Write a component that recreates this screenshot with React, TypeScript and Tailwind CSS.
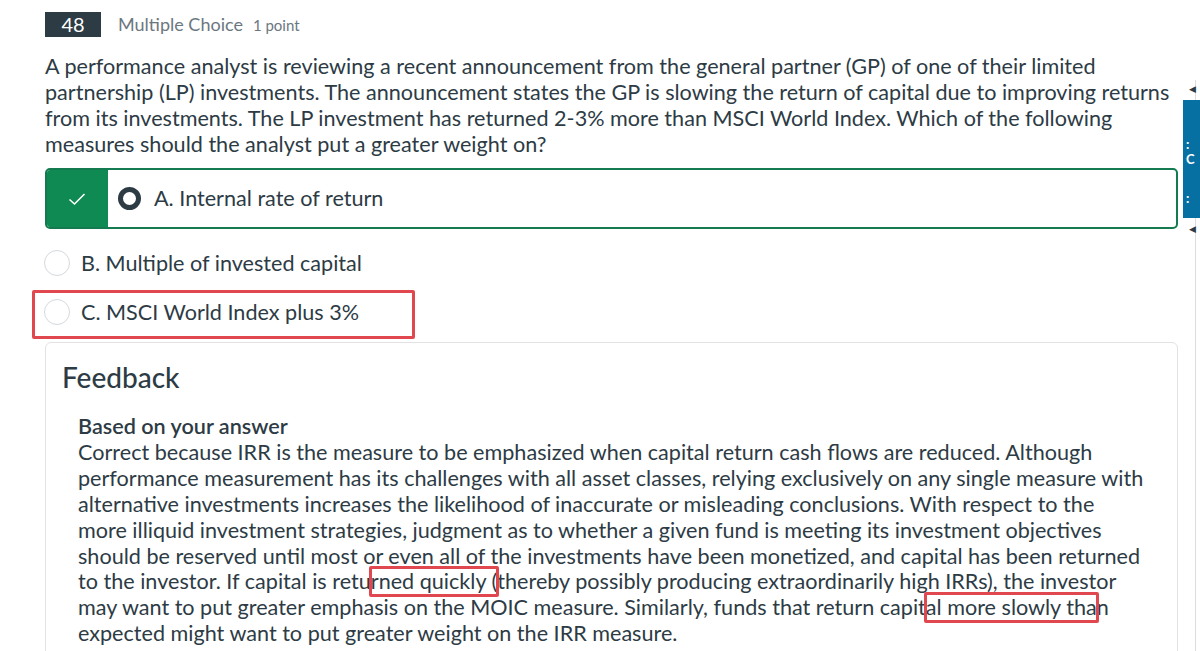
import React from 'react'

const question = [
  'A performance analyst is reviewing a recent announcement from the general partner (GP) of one of their limited',
  'partnership (LP) investments. The announcement states the GP is slowing the return of capital due to improving returns',
  'from its investments. The LP investment has returned 2-3% more than MSCI World Index. Which of the following',
  'measures should the analyst put a greater weight on?',
]

function Mark({ children }: { children: React.ReactNode }) {
  return (
    <span className="relative">
      {children}
      <span className="absolute -left-[2px] -right-[2px] -top-[2px] -bottom-[3px] border-[3px] border-[#e0474f] rounded-[2px]" />
    </span>
  )
}

export default function App() {
  return (
    <div className="relative w-[1200px] h-[651px] overflow-hidden bg-white text-[#2d3b45]" style={{ fontFamily: 'Lato, "Open Sans", sans-serif' }}>
      {/* right rail */}
      <div className="absolute left-[1195px] top-[80px] bottom-0 w-px bg-[#dcdcdc]" />
      <div className="absolute left-[1189px] top-[82px] text-[9px] text-[#2d3b45]">◀</div>
      <div className="absolute left-[1183px] top-[100px] w-[17px] h-[118px] bg-[#0770a3] text-white text-[13px] font-bold leading-none pl-[3px] pt-[38px]">
        <div>:</div>
        <div className="mt-[2px]">C</div>
        <div className="mt-[26px]">:</div>
      </div>
      <div className="absolute left-[1189px] top-[222px] text-[9px] text-[#2d3b45]">◀</div>

      <div className="pl-[45px] pr-[22px] pt-[11px]">
        {/* header */}
        <div className="flex items-center gap-[17px]">
          <div className="w-[56px] h-[25px] bg-[#2d3b45] text-white text-[20px] leading-[25px] text-center">48</div>
          <div className="flex items-baseline gap-[10px] text-[#6b7780]">
            <span className="text-[18px]">Multiple Choice</span>
            <span className="text-[15px]">1 point</span>
          </div>
        </div>

        {/* question */}
        <div className="mt-[15px] text-[21.6px] leading-[26px]">
          {question.map(l => (
            <div key={l} className="whitespace-nowrap">{l}</div>
          ))}
        </div>

        {/* answer A */}
        <div className="mt-[11px] flex h-[61px] w-[1133px] rounded-[5px] border-2 border-[#147a4f] overflow-hidden">
          <div className="w-[62px] bg-[#0f8a52] flex items-center justify-center -ml-[1px]">
            <svg width="18" height="14" viewBox="0 0 18 14" fill="none">
              <path d="M1.5 7.5 L6.5 12 L16.5 2" stroke="white" strokeWidth="1.6" />
            </svg>
          </div>
          <div className="flex items-center pl-[10px] gap-[13px]">
            <div className="w-[23px] h-[23px] rounded-full border-[5px] border-[#2d3b45]" />
            <span className="text-[21.6px]">A. Internal rate of return</span>
          </div>
        </div>

        {/* B */}
        <div className="mt-[18px] flex items-center h-[32px] -ml-[1px] gap-[11px]">
          <div className="w-[26px] h-[26px] rounded-full border border-[#d5d9dc]" />
          <span className="text-[21.6px]">B. Multiple of invested capital</span>
        </div>

        {/* C */}
        <div className="relative mt-[17px] flex items-center h-[32px] -ml-[1px] gap-[11px]">
          <div className="w-[26px] h-[26px] rounded-full border border-[#d5d9dc]" />
          <span className="text-[21.6px]">C. MSCI World Index plus 3%</span>
          <div className="absolute -left-[12px] -top-[6px] w-[383px] h-[49px] border-[3px] border-[#e0474f] rounded-[2px]" />
        </div>

        {/* feedback */}
        <div className="mt-[14px] w-[1133px] h-[400px] rounded-[6px] border border-[#e2e2e2] pl-[16px] pt-[17px]">
          <div className="text-[28px] leading-[34px] font-medium">Feedback</div>
          <div className="pl-[16px] mt-[20px] text-[21.6px] leading-[25.9px]">
            <div className="font-semibold">Based on your answer</div>
            <div className="whitespace-nowrap">Correct because IRR is the measure to be emphasized when capital return cash flows are reduced. Although</div>
            <div className="whitespace-nowrap">performance measurement has its challenges with all asset classes, relying exclusively on any single measure with</div>
            <div className="whitespace-nowrap">alternative investments increases the likelihood of inaccurate or misleading conclusions. With respect to the</div>
            <div className="whitespace-nowrap">more illiquid investment strategies, judgment as to whether a given fund is meeting its investment objectives</div>
            <div className="whitespace-nowrap">should be reserved until most or even all of the investments have been monetized, and capital has been returned</div>
            <div className="whitespace-nowrap">to the investor. If capital is retu<Mark>rned quickly (</Mark>thereby possibly producing extraordinarily high IRRs), the investor</div>
            <div className="whitespace-nowrap">may want to put greater emphasis on the MOIC measure. Similarly, funds that return capit<Mark>al more slowly tha</Mark>n</div>
            <div className="whitespace-nowrap">expected might want to put greater weight on the IRR measure.</div>
          </div>
        </div>
      </div>
    </div>
  )
}
